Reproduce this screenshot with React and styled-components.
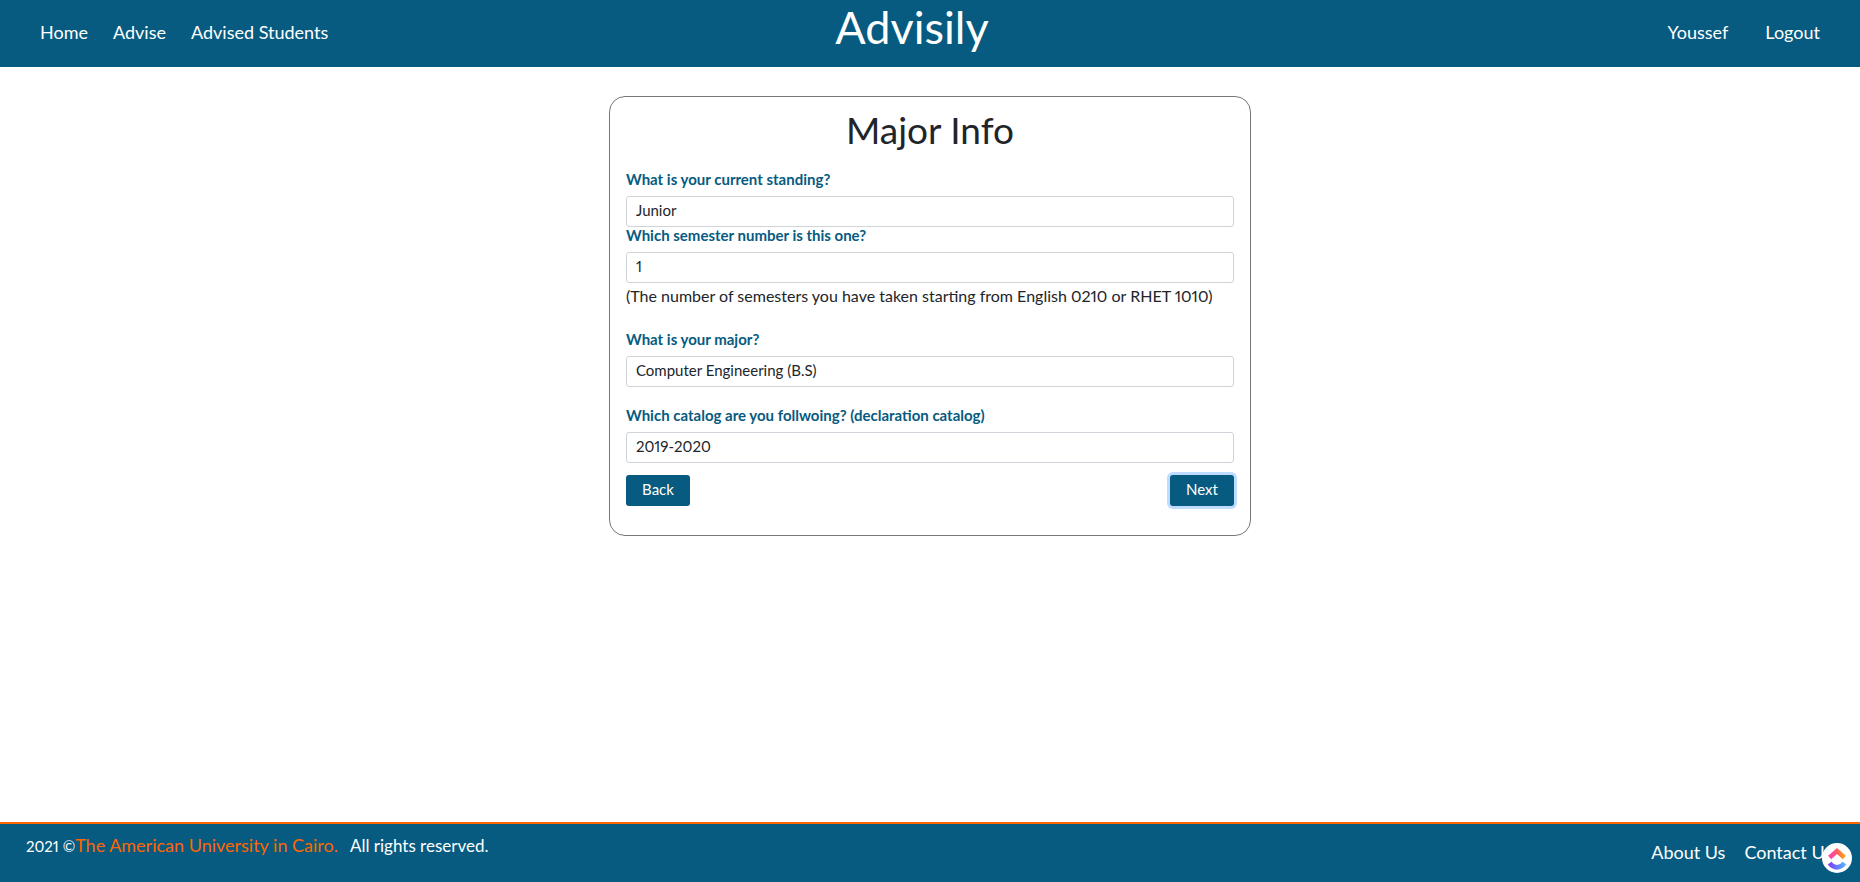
import React from 'react';
import styled, { createGlobalStyle, css } from 'styled-components';

const BLUE = '#075b80';
const ORANGE = '#ff6600';

const GlobalStyle = createGlobalStyle`
  *, *::before, *::after { box-sizing: border-box; }
  body {
    margin: 0;
    background: #fff;
    color: #212529;
    font-family: Lato, "Open Sans", sans-serif;
    font-size: 16px;
    font-variant-numeric: proportional-nums;
  }
`;

const Page = styled.div`
  display: flex;
  flex-direction: column;
  min-height: 100vh;
`;

const Header = styled.header`
  display: grid;
  grid-template-columns: 1fr auto 1fr;
  align-items: start;
  min-height: 67px;
  padding: 0 40px;
  background: ${BLUE};
  color: #fff;
`;

const Nav = styled.nav`
  display: flex;
  gap: ${({ $gap }) => $gap}px;
  justify-content: ${({ $end }) => ($end ? 'flex-end' : 'flex-start')};
  padding-top: 20px;
`;

const NavLink = styled.a`
  color: ${({ $accent }) => ($accent ? ORANGE : '#fff')};
  font-size: 18px;
  line-height: 24px;
  text-decoration: none;
  white-space: nowrap;
`;

const Brand = styled.div`
  padding-right: 36px;
  font-size: 45px;
  line-height: 54px;
`;

const Main = styled.main`
  flex: 1;
  display: flex;
  justify-content: center;
  align-items: flex-start;
  padding: 29px 16px;
`;

const Card = styled.form`
  width: 100%;
  max-width: 642px;
  padding: 16px 16px 29px;
  border: 1px solid #777;
  border-radius: 16px;
`;

const Title = styled.h1`
  margin: 0 0 24px;
  font-size: 37px;
  font-weight: 400;
  line-height: 34px;
  text-align: center;
`;

const Field = styled.div`
  display: flex;
  flex-direction: column;
  margin-bottom: ${({ $space = 0 }) => $space}px;
`;

const Label = styled.label`
  margin-bottom: 9px;
  color: ${BLUE};
  font-size: 15px;
  font-weight: 700;
  line-height: 16px;
`;

const controlText = css`
  height: 31px;
  font-family: inherit;
  font-size: 15px;
  line-height: 20px;
`;

const Input = styled.input`
  ${controlText}
  width: 100%;
  padding: 3px 9px 6px;
  border: 1px solid #ced4da;
  border-radius: 3px;
  background: #fff;
  color: #212529;
  font-variant-numeric: inherit;
`;

const Hint = styled.p`
  margin: 0;
  line-height: 26px;
`;

const Actions = styled.div`
  display: flex;
  justify-content: space-between;
`;

const Button = styled.button`
  ${controlText}
  width: 64px;
  padding: 0 0 3px;
  border: 0;
  border-radius: 3px;
  background: ${BLUE};
  color: #fff;
  box-shadow: ${({ $active }) => ($active ? '0 0 0 3px #bfdbff' : 'none')};
`;

const Footer = styled.footer`
  display: flex;
  justify-content: space-between;
  min-height: 60px;
  padding: 9px 28px 0 26px;
  border-top: 2px solid ${ORANGE};
  background: ${BLUE};
  color: #fff;
`;

const Copyright = styled.div`
  display: flex;
  align-items: baseline;
  height: 24px;
  line-height: 24px;
`;

const Year = styled.span`
  font-size: 15px;
`;

const Rights = styled.span`
  margin-left: 12px;
  font-size: 17px;
`;

const FooterLinks = styled.nav`
  display: flex;
  gap: 19px;
  padding-top: 7px;
`;

const Launcher = styled.button`
  position: fixed;
  right: 8px;
  bottom: 9px;
  display: grid;
  place-items: center;
  width: 30px;
  height: 30px;
  padding: 0;
  border: 0;
  border-radius: 50%;
  background: #fff;
`;

const LauncherIcon = () => (
  <svg width="30" height="30" viewBox="0 0 30 30" fill="none" strokeWidth="4.6" aria-hidden="true">
    <defs>
      <linearGradient id="roof" x1="6" y1="0" x2="24" y2="0" gradientUnits="userSpaceOnUse">
        <stop stopColor="#ff3bc4" />
        <stop offset="0.5" stopColor="#ff5a68" />
        <stop offset="1" stopColor="#ffb400" />
      </linearGradient>
      <linearGradient id="smile" x1="6" y1="0" x2="24" y2="0" gradientUnits="userSpaceOnUse">
        <stop stopColor="#8138fb" />
        <stop offset="1" stopColor="#4fbcfb" />
      </linearGradient>
    </defs>
    <path d="M7.6 14.4 15 8l7.4 6.4" stroke="url(#roof)" />
    <path d="M7.6 20.2c4.2 5.6 10.6 5.6 14.8 0" stroke="url(#smile)" />
  </svg>
);

const FIELDS = [
  { id: 'standing', label: 'What is your current standing?', value: 'Junior' },
  {
    id: 'semester',
    label: 'Which semester number is this one?',
    value: '1',
    hint: '(The number of semesters you have taken starting from English 0210 or RHET 1010)',
    space: 22,
  },
  { id: 'major', label: 'What is your major?', value: 'Computer Engineering (B.S)', space: 20 },
  {
    id: 'catalog',
    label: 'Which catalog are you follwoing? (declaration catalog)',
    value: '2019-2020',
    space: 12,
  },
];

export default function App() {
  return (
    <Page>
      <GlobalStyle />
      <Header>
        <Nav $gap={25}>
          <NavLink href="#home">Home</NavLink>
          <NavLink href="#advise">Advise</NavLink>
          <NavLink href="#students">Advised Students</NavLink>
        </Nav>
        <Brand>Advisily</Brand>
        <Nav $gap={37} $end>
          <NavLink href="#profile">Youssef</NavLink>
          <NavLink href="#logout">Logout</NavLink>
        </Nav>
      </Header>
      <Main>
        <Card onSubmit={(e) => e.preventDefault()}>
          <Title>Major Info</Title>
          {FIELDS.map(({ id, label, value, hint, space }) => (
            <Field key={id} $space={space}>
              <Label htmlFor={id}>{label}</Label>
              <Input id={id} type="text" defaultValue={value} />
              {hint && <Hint>{hint}</Hint>}
            </Field>
          ))}
          <Actions>
            <Button type="button">Back</Button>
            <Button type="submit" $active>Next</Button>
          </Actions>
        </Card>
      </Main>
      <Footer>
        <Copyright>
          <Year>2021 ©</Year>
          <NavLink href="#auc" $accent>The American University in Cairo.</NavLink>
          <Rights>All rights reserved.</Rights>
        </Copyright>
        <FooterLinks>
          <NavLink href="#about">About Us</NavLink>
          <NavLink href="#contact">Contact Us</NavLink>
        </FooterLinks>
      </Footer>
      <Launcher type="button" aria-label="Open launcher">
        <LauncherIcon />
      </Launcher>
    </Page>
  );
}
